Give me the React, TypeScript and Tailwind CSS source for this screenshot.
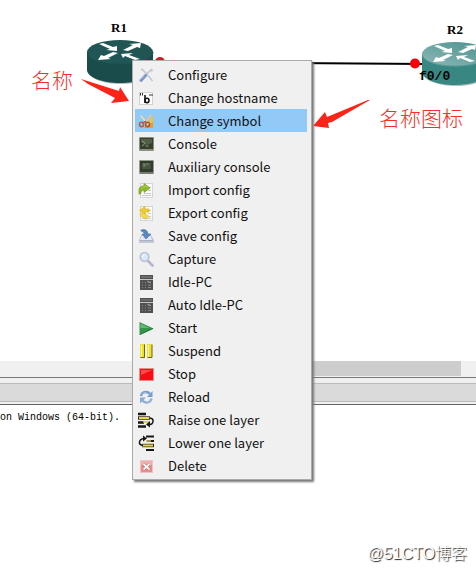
import type { ReactNode } from 'react'

type MenuEntry = { label: string; icon: ReactNode; active?: boolean }

function Icon({ children }: { children: ReactNode }) {
  return (
    <svg className="h-4 w-4 shrink-0" viewBox="0 0 16 16" fill="none" aria-hidden="true">
      {children}
    </svg>
  )
}

const terminal = (
  <Icon>
    <rect x="1" y="1" width="15" height="14" rx="1" fill="#8b8e82" />
    <rect x="2" y="2" width="13" height="11" fill="#353f2c" />
    <path d="M3 3h11v4l-5 2-6-3z" fill="#52604a" />
    <path d="M4 5l3 2.5L4 10M7.500 10h3" stroke="#a7b495" strokeWidth=".8" />
  </Icon>
)

const auxTerminal = (
  <Icon>
    <rect x="1" y="1" width="15" height="14" rx="1" fill="#96998f" />
    <rect x="2" y="2" width="13" height="11" fill="#323c2d" />
    <rect x="4" y="4" width="9" height="6" fill="#475440" />
    <path d="M5 5h2v2H5M8 5h3" stroke="#8d9a80" strokeWidth=".8" />
    <path d="M2 14h13" stroke="#5c5e57" />
  </Icon>
)

const calculator = (
  <Icon>
    <rect x="2" y="1" width="13" height="15" fill="#505050" />
    <rect x="3" y="2" width="11" height="2" fill="#6b6b6b" />
    <path d="M2 5.500h13" stroke="#c4c4c4" />
    <path d="M4 8.500h1m2 0h1m2 0h3M4 11h1m2 0h1m2 0h3M4 13.500h1m2 0h1m2 0h3" stroke="#868686" />
    <path d="M9 7l4 1.500" stroke="#b4b4b4" strokeWidth=".7" />
  </Icon>
)

const sheet = (
  <>
    <rect x="2.500" y="1.500" width="12" height="14" fill="#fafafa" stroke="#d4d4d4" />
    <path d="M10 5.500h3M10 8.500h3M6 11.500h7M4 13.500h9" stroke="#bcbcbc" strokeWidth=".8" />
  </>
)

const entries: MenuEntry[] = [
  {
    label: 'Configure',
    icon: (
      <Icon>
        <path d="M3 2l2 1 8 9 1.500 2" stroke="#c3c8d2" strokeWidth="1.600" />
        <path d="M14.500 2.500L11 4.500 7 9" stroke="#bac2d2" strokeWidth="1.500" />
        <path d="M13 1.500l-1.500 3 2 .5 2-2" stroke="#cdd3de" />
        <path d="M7.500 8.500L3 13.500" stroke="#7b94c2" strokeWidth="3" strokeLinecap="round" />
        <path d="M6.500 8.500L3 12.500" stroke="#a2b8df" />
      </Icon>
    ),
  },
  {
    label: 'Change hostname',
    icon: (
      <Icon>
        <rect x="1.500" y="2.500" width="13" height="12" fill="#fdfdfd" stroke="#d2d2d2" />
        <path d="M2.500 3v2.500M4.500 3v2.500M12 4v2M14 4v2" stroke="#333" />
        <path d="M7 5v8" stroke="#111" strokeWidth="1.600" />
        <ellipse cx="9" cy="10.500" rx="2" ry="2.200" stroke="#111" strokeWidth="1.500" />
      </Icon>
    ),
  },
  {
    label: 'Change symbol',
    active: true,
    icon: (
      <Icon>
        <path d="M15 2v13H7z" fill="#f2c238" />
        <path d="M15 9v6H5z" fill="#ec9b2d" />
        <path d="M3 3l8 8M13 2L8 9" stroke="#e7c5a0" strokeWidth="1.800" />
        <path d="M2.500 2.500l5 6" stroke="#eee7e0" />
        <ellipse cx="3.500" cy="11.500" rx="2" ry="2.200" stroke="#b05f46" strokeWidth="1.500" />
        <ellipse cx="9.500" cy="11.500" rx="2" ry="2.200" stroke="#aa5638" strokeWidth="1.500" />
        <path d="M5 10l3-2" stroke="#a85949" strokeWidth="1.500" />
      </Icon>
    ),
  },
  { label: 'Console', icon: terminal },
  { label: 'Auxiliary console', icon: auxTerminal },
  {
    label: 'Import config',
    icon: (
      <Icon>
        {sheet}
        <path d="M1 12V8q0-4 5-4V1.500L12 6l-6 4.500V8q-3 0-3.500 4z" fill="#8db82b" stroke="#739b1d" strokeWidth=".7" />
        <path d="M3 6.500q1-1.500 4-1.500V3.500L10 6" stroke="#b5d565" strokeWidth=".8" />
      </Icon>
    ),
  },
  {
    label: 'Export config',
    icon: (
      <Icon>
        {sheet}
        <path d="M7 1.500v2.500h4v3H7V9L1.500 5.500z" fill="#efcd31" stroke="#d8b11b" strokeWidth=".7" />
        <path d="M2 8q0 5 5 4.500v2l4-3-4-3.500v2q-2 0-2-2z" fill="#f4da4c" stroke="#dfbe2e" strokeWidth=".6" />
      </Icon>
    ),
  },
  {
    label: 'Save config',
    icon: (
      <Icon>
        <path d="M3 7h10l3 5v3H1v-3z" fill="#c2c7d5" />
        <path d="M3.500 8h9L14 12H2z" fill="#e6e9f1" />
        <path d="M1.500 12.500h13.500" stroke="#a9aec0" />
        <path d="M3 2q6-2 7 4h3l-5 5-4-5h2.500Q6 3.500 3 3z" fill="#5b88c1" stroke="#4170ad" strokeWidth=".6" />
      </Icon>
    ),
  },
  {
    label: 'Capture',
    icon: (
      <Icon>
        <path d="M9.500 9.500l5 5" stroke="#b6b4cb" strokeWidth="2.600" strokeLinecap="round" />
        <circle cx="6.500" cy="6" r="4.300" fill="#dce8fa" stroke="#bdc4dd" strokeWidth="1.700" />
        <path d="M4.500 6q0-2.500 2.500-2.500" stroke="#fff" />
      </Icon>
    ),
  },
  { label: 'Idle-PC', icon: calculator },
  { label: 'Auto Idle-PC', icon: calculator },
  {
    label: 'Start',
    icon: (
      <Icon>
        <path d="M1.500 2v13L15.500 8.500z" fill="#34944b" />
        <path d="M2.500 3.500v4.500l9 0z" fill="#66b776" />
        <path d="M2 14.500l13-6" stroke="#207437" />
      </Icon>
    ),
  },
  {
    label: 'Suspend',
    icon: (
      <Icon>
        <path d="M2 1h5v14H2zM9 1h5v14H9z" fill="#ebe12c" />
        <path d="M3 2h1v12H3zM10 2h1v12h-1z" fill="#fff987" />
        <path d="M6.500 1.500v13H2.500M14 1.500v13H9.500" stroke="#696326" />
      </Icon>
    ),
  },
  {
    label: 'Stop',
    icon: (
      <Icon>
        <rect x="1.500" y="2.500" width="14" height="12" fill="#f20e12" stroke="#e88b8b" />
        <path d="M3 4h11L3 9z" fill="#ff4b4e" />
      </Icon>
    ),
  },
  {
    label: 'Reload',
    icon: (
      <Icon>
        <path d="M3 7q1-4 5-4 2.500 0 4 2" stroke="#789ccc" strokeWidth="2.400" />
        <path d="M14.500 2v6H9z" fill="#789ccc" />
        <path d="M13.500 9.500q-1 4-5 4-2.500 0-4-2" stroke="#8baad4" strokeWidth="2.400" />
        <path d="M2 14.500v-6h6z" fill="#8baad4" />
        <path d="M4 6q1-2.500 4-2.500M12.500 11q-1 2-4 2" stroke="#bdd1ec" strokeWidth=".8" />
      </Icon>
    ),
  },
  {
    label: 'Raise one layer',
    icon: (
      <Icon>
        <path d="M0 2h8M0 10.500h6M0 14.500h8" stroke="#171717" strokeWidth="2.400" />
        <path d="M0 6h12" stroke="#292718" strokeWidth="3.400" />
        <path d="M1 6h11" stroke="#ead647" strokeWidth="2" />
        <path d="M5 10h6" stroke="#cfc05b" strokeWidth="1.500" />
        <path d="M11 6q4.500 0 4 3.500T11 12.500" stroke="#171717" strokeWidth="1.500" />
        <path d="M12 9l-4 3.500 4 3z" fill="#171717" />
      </Icon>
    ),
  },
  {
    label: 'Lower one layer',
    icon: (
      <Icon>
        <path d="M8 1.500h8M9 6h7M8 15h8" stroke="#171717" strokeWidth="2.200" />
        <path d="M4 10.500h12" stroke="#292718" strokeWidth="3.400" />
        <path d="M4 10.500h11" stroke="#ead647" strokeWidth="2" />
        <path d="M8 6h5" stroke="#cfc05b" strokeWidth="1.500" />
        <path d="M5 10.500Q1 10 1.500 7T6 3.500" stroke="#171717" strokeWidth="1.500" />
        <path d="M5 .5L9 3.500 5 6.500z" fill="#171717" />
      </Icon>
    ),
  },
  {
    label: 'Delete',
    icon: (
      <Icon>
        <rect x="2.500" y="2.500" width="12" height="12" fill="#e58d8b" stroke="#edc3c3" />
        <rect x="3" y="3" width="11" height="4" fill="#efb1af" />
        <path d="M5.500 6l6 5.500M11.500 6l-6 5.500" stroke="#c65556" strokeWidth="3" />
        <path d="M5.500 6l6 5.500M11.500 6l-6 5.500" stroke="#fff" strokeWidth="1.700" />
      </Icon>
    ),
  },
]

type RouterProps = { id: string; from: string; to: string; body: string; edge: string }

function Router({ id, from, to, body, edge }: RouterProps) {
  return (
    <svg className="block" width="67" height="45" viewBox="0 0 67 45" aria-hidden="true">
      <defs>
        <linearGradient id={id} x1="0" y1="1" x2="1" y2="0">
          <stop offset="0" stopColor={from} />
          <stop offset="1" stopColor={to} />
        </linearGradient>
      </defs>
      <path d="M1 13v18c0 7 15 13 33 13s32-6 32-13V13z" fill="#b5bebe" />
      <path d="M0 12v18c0 7 15 13 33 13s33-6 33-13V12z" fill={body} />
      <ellipse cx="33" cy="12" rx="33" ry="12" fill={`url(#${id})`} />
      <path d="M0 12c0 7 15 12 33 12s33-5 33-12" fill="none" stroke={edge} strokeWidth="1" />
      <g fill="#fff">
        <path d="M12 4l4-1 10 4 4-1v5l-11-1 4-1z" />
        <path d="M36 10l10-5-4-1 12-1-1 5-3-1-9 4z" />
        <path d="M31 13l-10 5 3 1-13 1 3-5 3 1 9-4z" />
        <path d="M34 14l12-1-4 2 11 4-5 1-10-4-2 2z" />
      </g>
    </svg>
  )
}

function Canvas() {
  return (
    <section className="relative min-h-[361px] overflow-hidden bg-white" aria-label="Topology">
      <svg className="absolute top-0 left-0" width="476" height="140" aria-hidden="true">
        <path d="M160 62L427 64" stroke="#000" strokeWidth="2" />
        <circle cx="160" cy="62" r="5" fill="#e0152b" />
      </svg>
      <div className="absolute top-10 left-[87px]">
        <Router id="r1-top" from="#1f5857" to="#215453" body="#1b4c4c" edge="#1f5251" />
      </div>
      <div className="absolute top-[42px] left-[422px]">
        <Router id="r2-top" from="#8fb9b7" to="#47908d" body="#398783" edge="#5f9f9c" />
      </div>
      <svg className="absolute top-0 left-0" width="476" height="140" aria-hidden="true">
        <circle cx="415" cy="63.500" r="5" fill="#fb0007" />
        <path d="M81 79L119 91 120 87 129 101 111 103 115 98 88 84z" fill="#fb2418" />
        <path d="M370 100L332 122 328 123 329 128 313 126 325 112 327 117 368 100z" fill="#fb2418" />
      </svg>
      <div className="absolute top-5 left-[111px] font-['Liberation_Serif',serif] text-[13px] leading-4 font-bold">R1</div>
      <div className="absolute top-[22px] left-[447px] font-['Liberation_Serif',serif] text-[13px] leading-4 font-bold">R2</div>
      <div className="absolute top-[69px] left-[419px] font-['Liberation_Mono',monospace] text-[13px] leading-4 font-bold">f0/0</div>
      <div className="absolute top-[67px] left-[31px] font-['Noto_Sans_CJK_SC',sans-serif] text-[21px] leading-6 font-light text-[#f72d28]">名称</div>
      <div className="absolute top-[105px] left-[379px] font-['Noto_Sans_CJK_SC',sans-serif] text-[21px] leading-6 font-light whitespace-nowrap text-[#f72d28]">名称图标</div>
    </section>
  )
}

function ContextMenu() {
  return (
    <div
      role="menu"
      className="absolute top-[60px] left-[132px] w-[180px] border border-[#aaa] bg-[#f0f0f0] py-[2px] pr-1 pl-[2px] shadow-[2px_2px_2px_#777]"
    >
      {entries.map(e => (
        <button
          key={e.label}
          type="button"
          role="menuitem"
          className={`flex h-[23px] w-full items-center gap-[14px] pl-[3px] text-left font-['Noto_Sans_CJK_SC',sans-serif] text-[13px] leading-5 whitespace-nowrap text-[#111] ${e.active ? 'bg-[#91c9f7]' : 'hover:bg-[#dceefc]'}`}
        >
          {e.icon}
          {e.label}
        </button>
      ))}
    </div>
  )
}

export default function App() {
  return (
    <main className="relative flex min-h-screen flex-col overflow-hidden bg-white text-black">
      <Canvas />
      <div className="flex h-4 bg-[#f0f0f0] pr-[15px]">
        <div className="ml-auto h-[15px] w-3/5 bg-[#cdcdcd]" />
      </div>
      <div className="border-t border-[#777] bg-[#f0f0f0] pt-[5px] pb-[2px]">
        <div className="h-[19px] border-y border-[#bbb] bg-[#dadada]" />
      </div>
      <section className="flex flex-1 flex-col justify-between border-t border-[#666]" aria-label="Console">
        <pre className="mt-[5px] font-['Liberation_Mono',monospace] text-[10px] leading-4">on Windows (64-bit).</pre>
        <p className="self-end pr-[9px] pb-[6px] font-['Liberation_Sans','Noto_Sans_CJK_SC',sans-serif] text-base leading-5 font-light text-white [text-shadow:1px_1px_1px_#222]">
          @51CTO博客
        </p>
      </section>
      <ContextMenu />
    </main>
  )
}
